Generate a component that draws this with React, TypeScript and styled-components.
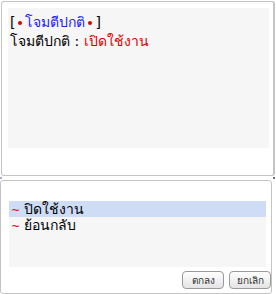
import React from "react";
import styled, { createGlobalStyle } from "styled-components";

const Global = createGlobalStyle`
  html, body { margin: 0; padding: 0; background: #ffffff; }
  body { width: 276px; height: 294px; overflow: hidden; font-family: Tahoma, "DejaVu Sans", sans-serif; }
`;

const Page = styled.div`
  position: relative;
  width: 276px;
  height: 294px;
`;

const TopPanel = styled.div`
  box-sizing: border-box;
  margin: 1px 0 0 1px;
  width: 274px;
  height: 175px;
  border: 1px solid #c4c4c4;
  border-right-width: 2px;
  border-radius: 3px;
  padding: 6px 4px 0 6px;
`;

const InfoBox = styled.div`
  background: #f6f6f6;
  height: 140px;
  padding: 5px 0 0 2px;
  box-sizing: border-box;
  font-size: 14px;
  line-height: 19px;
  color: #000;
`;

const Line = styled.div`
  white-space: nowrap;
`;

const Tone = styled.span<{ $c: string }>`
  color: ${(p) => p.$c};
`;

const Dot = styled.span`
  display: inline-block;
  width: 4px;
  height: 4px;
  border-radius: 50%;
  background: #e00000;
  margin: 0 3px;
  vertical-align: middle;
`;

const BottomPanel = styled.div`
  box-sizing: border-box;
  margin: 4px 0 0 0;
  width: 272px;
  height: 114px;
  border: 1px solid #c4c4c4;
  border-radius: 3px;
  padding: 20px 5px 0 8px;
  display: flex;
  flex-direction: column;
`;

const ListBox = styled.div`
  background: #f6f6f6;
  height: 66px;
  font-size: 14px;
  color: #000;
`;

const Item = styled.div<{ $sel?: boolean }>`
  height: 16px;
  line-height: 16px;
  padding-left: 2px;
  background: ${(p) => (p.$sel ? "#cfdcf6" : "transparent")};
  white-space: nowrap;
`;

const Tilde = styled.span`
  display: inline-block;
  color: #e00000;
  font-size: 11px;
  margin-right: 4px;
`;

const Buttons = styled.div`
  display: flex;
  justify-content: flex-end;
  gap: 5px;
  margin: 4px -5px 0 0;
`;

const Btn = styled.div`
  box-sizing: border-box;
  width: 42px;
  height: 18px;
  border: 1px solid #9a9a9a;
  border-radius: 4px;
  background: linear-gradient(#ffffff, #e4e4e4);
  font-size: 10px;
  color: #333;
  display: flex;
  align-items: center;
  justify-content: center;
`;

const Mark = styled.div<{ $l: number; $c: string }>`
  position: absolute;
  left: ${(p) => p.$l}px;
  top: 176px;
  width: 2px;
  height: 2px;
  background: ${(p) => p.$c};
`;

export default function App() {
  return (
    <Page>
      <Global />
      <TopPanel>
        <InfoBox>
          <Line>
            [<Dot /><Tone $c="#2020ff">โจมตีปกติ</Tone><Dot />]
          </Line>
          <Line>
            โจมตีปกติ : <Tone $c="#e00000">เปิดใช้งาน</Tone>
          </Line>
        </InfoBox>
      </TopPanel>
      <BottomPanel>
        <ListBox>
          <Item $sel>
            <Tilde>~</Tilde>ปิดใช้งาน
          </Item>
          <Item>
            <Tilde>~</Tilde>ย้อนกลับ
          </Item>
        </ListBox>
        <Buttons>
          <Btn>ตกลง</Btn>
          <Btn>ยกเลิก</Btn>
        </Buttons>
      </BottomPanel>
      <Mark $l={0} $c="#b0a8e0" />
      <Mark $l={273} $c="#6a6a8a" />
    </Page>
  );
}
